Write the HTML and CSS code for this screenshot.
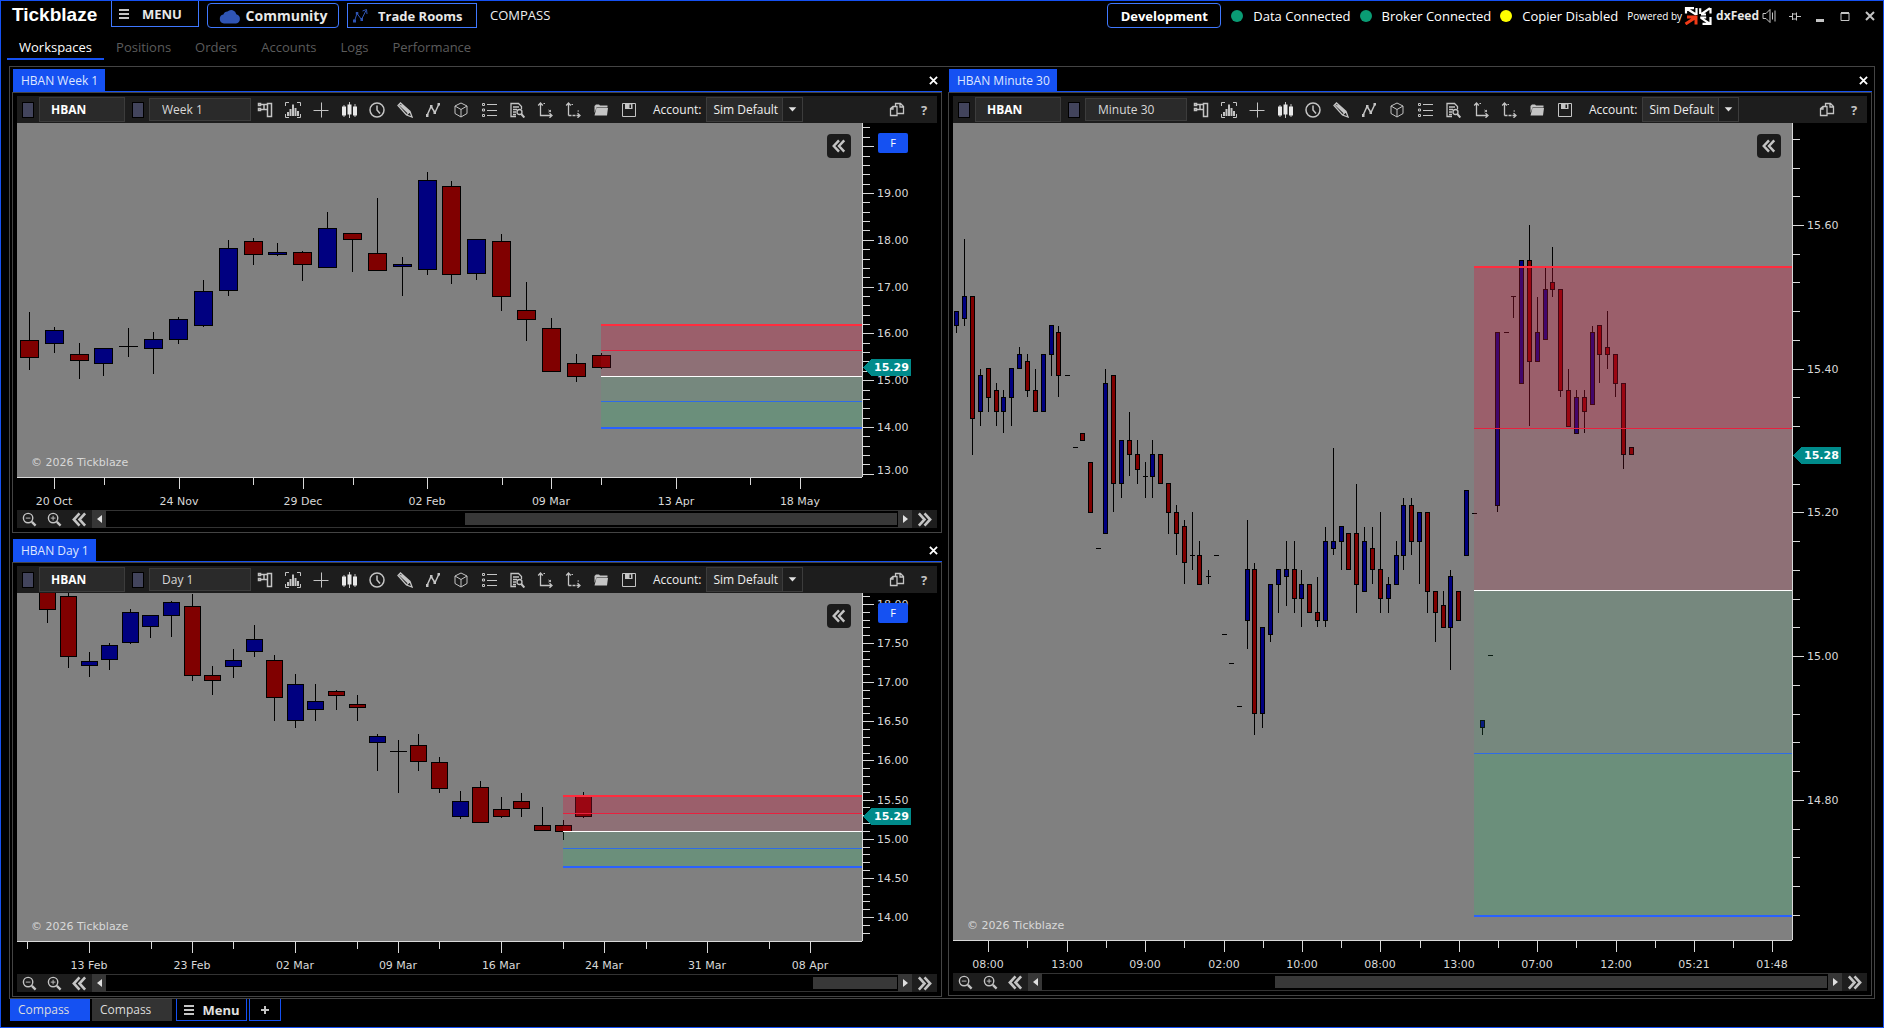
FILE: index.html
```html
<!DOCTYPE html>
<html lang="en">
<head>
<meta charset="utf-8">
<title>Tickblaze</title>
<link rel="stylesheet" href="styles.css">
</head>
<body>
<svg class="defs" aria-hidden="true">
  <symbol id="i-dom" viewBox="0 0 16 16"><path stroke-width="1.500" d="M10.500 1.500h4v13h-4zM1.500 1.500h2v2h-2zM1.500 6.500h2v2h-2zM4 2.500h6.500M4 7.500h6.500M7 2.500v5"/></symbol>
  <symbol id="i-profile" viewBox="0 0 16 16"><path d="M.5 4V.5H4M12 .5h3.500V4M.5 12v3.500H4M12 15.500h3.500V12"/><path stroke-width="2" d="M3 14v-4M5.500 14V7M8 14V2.500M10.500 14V6M13 14v-5"/></symbol>
  <symbol id="i-plus" viewBox="0 0 16 16"><path d="M8.500 .5v15M.5 8.500h15"/></symbol>
  <symbol id="i-candles" viewBox="0 0 16 16"><path d="M3 3v12M8.500 0v16M14 2v13"/><path stroke="#e8e8e8" stroke-width="4" d="M3 4.500v9M8.500 2.500v10M14 4.500v9"/></symbol>
  <symbol id="i-clock" viewBox="0 0 16 16"><circle cx="8" cy="8" r="7" stroke-width="1.500"/><path d="M8 3.500V8l3 3.500" stroke-width="1.500"/></symbol>
  <symbol id="i-pencil" viewBox="0 0 16 16"><path stroke-width="1.300" d="M1 3.500L3.500 1l9.500 8.500 2 5.500-5.500-2zM2.200 2.500l9 8.500M4.500 3l7.500 7M13 9.500L9.500 13"/></symbol>
  <symbol id="i-zigzag" viewBox="0 0 16 16"><path d="M2 13.500L6 4.500l4 6L14 2" stroke-width="1.500"/><path class="solid" d="M1 12h2.500v3H1zM5 3h2.500v3H5zM8.500 9h2.500v3H8.500zM12.500 1h2.500v2.500h-2.500z"/></symbol>
  <symbol id="i-cube" viewBox="0 0 16 16"><path d="M8 1l6 3v7.500L8 15l-6-3.500V4zM2 4l6 3.500L14 4M8 7.500V15"/></symbol>
  <symbol id="i-list" viewBox="0 0 16 16"><path d="M1.500 1.500h2v2h-2zM1.500 7h2v2h-2zM1.500 12.500h2v2h-2zM6 2.500h10M6 8.500h10M6 13.500h10"/></symbol>
  <symbol id="i-search" viewBox="0 0 16 16"><path stroke-width="1.300" d="M7 14.500H2v-13h7.500l3 3V7M4 5h6M4 7.500h4M4 10h3M4 12.500h3"/><circle cx="10.500" cy="10" r="2.500" stroke-width="1.300"/><path d="M12.300 12l3 3.500" stroke-width="2"/></symbol>
  <symbol id="i-axisx" viewBox="0 0 16 16"><path stroke-width="1.300" d="M3.500 2v11.500H14M1.200 3.500l2.300-2.500 2.300 2.500M12.500 11.200l2.500 2.300-2.500 2.300"/><path d="M6.500 1.500h1.500M11.500 8l2.500 2M14 8l-2.500 2"/></symbol>
  <symbol id="i-axisy" viewBox="0 0 16 16"><path stroke-width="1.300" d="M3.500 2v11.500M1.200 3.500l2.300-2.500 2.300 2.500M12.500 11.200l2.500 2.300-2.500 2.300"/><path stroke-width="1.300" stroke-dasharray="3 1" d="M3.500 13.500h10.500"/><path d="M6.500 2.500h1.500M12.500 9h1.500"/></symbol>
  <symbol id="i-folder" viewBox="0 0 16 16"><path class="solid" d="M1.500 4L3 2.500h3l1 1h7.500v2H3.500L1.500 11zM3.500 6H15l-1 7.500H1.500z"/></symbol>
  <symbol id="i-save" viewBox="0 0 16 16"><path d="M1.500 1.500h13v13h-13z"/><path class="solid" d="M4 1.500h7.500V7H4z"/><path class="gap" d="M8.500 2.500h1.500V6H8.500z"/></symbol>
  <symbol id="i-copy" viewBox="0 0 16 16"><path stroke-width="1.300" d="M5.500 13.500H1.500v-7l2.500-2h4v9H5.500M4 4.500v2.500H1.500M6.500 4.500V1.500h5l3 3v7H8M11 1.500V5h3.500"/></symbol>
  <symbol id="i-zoomout" viewBox="0 0 16 16"><circle cx="6.500" cy="6.500" r="5" stroke-width="1.500"/><path d="M4 6.500h5"/><path stroke-width="2.500" d="M10.500 10.500l4 4"/></symbol>
  <symbol id="i-zoomin" viewBox="0 0 16 16"><circle cx="6.500" cy="6.500" r="5" stroke-width="1.500"/><path d="M4 6.500h5M6.500 4v5"/><path stroke-width="2.500" d="M10.500 10.500l4 4"/></symbol>
  <symbol id="i-left2" viewBox="0 0 16 16"><path stroke-width="2.800" d="M8 1.500L2 8l6 6.500M14 1.500L8 8l6 6.500"/></symbol>
  <symbol id="i-right2" viewBox="0 0 16 16"><path stroke-width="2.800" d="M8 1.500L14 8l-6 6.500M2 1.500L8 8l-6 6.500"/></symbol>
  <symbol id="i-burger" viewBox="0 0 12 12"><path stroke-width="2" d="M1 2h10M1 6h10M1 10h10"/></symbol>
  <symbol id="i-x" viewBox="0 0 10 10"><path stroke-width="2" d="M1 1l8 8M9 1L1 9"/></symbol>
</svg>

<div class="app">
  <header class="titlebar">
    <div class="logo">Tickblaze</div>
    <button class="menu-button"><svg class="icon-burger"><use href="#i-burger"/></svg>MENU</button>
    <button class="link-button community"><svg class="cloud" viewBox="0 0 22 16"><path d="M5 15.500a4.500 4.500 0 0 1-.6-8.900A4.600 4.600 0 0 1 8.500 3.500 5.200 5.200 0 0 1 17.300 6.300 4.700 4.700 0 0 1 17 15.500z"/></svg>Community</button>
    <button class="link-button rooms"><svg class="rooms-icon" viewBox="0 0 16 16"><path d="M2.500 13L5 5.500l4.500 6L14 2.500M10.500 3l4-1.500.5 4.500"/><path class="solid" d="M1 11.500h3v3H1zM3.800 4h2.500v2.500H3.800zM8.500 10h2.500v3H8.500z"/></svg>Trade Rooms</button>
    <span class="workspace-name">COMPASS</span>
    <div class="status">
      <button class="mode">Development</button>
      <span class="state"><i class="dot ok"></i>Data Connected</span>
      <span class="state"><i class="dot ok"></i>Broker Connected</span>
      <span class="state"><i class="dot warn"></i>Copier Disabled</span>
      <span class="powered">Powered by</span>
      <svg class="dx" viewBox="0 0 28 18"><g fill="none" stroke="#fff" stroke-width="2.200"><path d="M2 6.500V1.200h8M2.500 1.500l9.500 6M12.500 1v7"/><path d="M16.200 7V1.200M26 1.200l-8.500 5.800M26.500 1v5.500M17 7.500h5"/><path d="M26.500 10v6.800h-8M17 10.800l9 6M16.200 10.500h6"/></g><path fill="none" stroke="#f03a17" stroke-width="3" d="M1.500 17l10-6.500M3 10h9v7.500"/></svg>
      <strong class="feed">dxFeed</strong>
    </div>
    <div class="window-buttons">
      <button aria-label="Sound"><svg viewBox="0 0 14 14"><path d="M1 4.500h3l4-4v13l-4-4H1zM10.500 3.500v7M13 1.500v11"/></svg></button>
      <button aria-label="Pin"><svg viewBox="0 0 14 14"><path d="M1 7.500h3M4.500 4v7M4.500 5h4v5h-4M8.500 3.500v8M9 7.500h4"/></svg></button>
      <button aria-label="Minimize"><svg viewBox="0 0 14 14"><path stroke-width="3" d="M3 11.500h8"/></svg></button>
      <button aria-label="Maximize"><svg viewBox="0 0 14 14"><path d="M3 4h8v7.500H3z"/><path stroke-width="2" d="M3 4h8"/></svg></button>
      <button aria-label="Close"><svg viewBox="0 0 14 14"><path stroke-width="2" d="M3 3l8 8M11 3l-8 8"/></svg></button>
    </div>
  </header>

  <nav class="sections">
    <a class="active" href="#">Workspaces</a>
    <a href="#">Positions</a>
    <a href="#">Orders</a>
    <a href="#">Accounts</a>
    <a href="#">Logs</a>
    <a href="#">Performance</a>
  </nav>

  <main class="workspace">
    <div class="column stack">
      <section class="panel" data-chart="week"></section>
      <section class="panel" data-chart="day"></section>
    </div>
    <div class="column single">
      <section class="panel" data-chart="minute"></section>
    </div>
  </main>

  <footer class="bottom">
    <button class="sheet active">Compass</button>
    <button class="sheet">Compass</button>
    <button class="outlined sheet-menu"><svg class="icon-burger"><use href="#i-burger"/></svg>Menu</button>
    <button class="outlined add" aria-label="Add workspace"><svg viewBox="0 0 10 10"><path stroke-width="2" d="M5 1v8M1 5h8"/></svg></button>
  </footer>
</div>
<script src="app.js"></script>
</body>
</html>
```
FILE: styles.css
```css
:root {
  --blue: #1551f2;
  --blue-line: #3f78ff;
  --frame: #444;
  --bar: #1d1d1d;
  --field: #2a2a2a;
  --icon: #c4c4c4;
}
* { box-sizing: border-box; }
body {
  margin: 0;
  background: #000;
  color: #fff;
  font: 12px/16px "Open Sans", "Noto Sans", sans-serif;
}
button, input, select { font: inherit; color: inherit; margin: 0; padding: 0; border: 0; background: none; border-radius: 0; }
button { display: flex; align-items: center; justify-content: center; cursor: pointer; }
svg { display: block; fill: none; stroke: var(--icon); }
.solid { fill: var(--icon); stroke: none; }
.gap { fill: var(--bar); stroke: none; }
.defs { position: absolute; width: 0; height: 0; }

.app {
  display: flex;
  flex-direction: column;
  min-height: 100vh;
  border: 1px solid var(--blue);
}

/* Title bar */
.titlebar { display: flex; height: 30px; align-items: flex-start; font-size: 13px; white-space: nowrap; }
.logo { width: 99px; margin-left: 11px; font: bold 19px/28px "Liberation Sans", Arial, sans-serif; }
.menu-button, .link-button, .mode { font-weight: bold; border: 1px solid var(--blue-line); color: #e8e8e8; }
.menu-button { width: 88px; height: 26px; border-top: 0; padding-left: 6px; gap: 12px; justify-content: flex-start; }
.icon-burger { width: 12px; height: 12px; }
.link-button { height: 25px; margin-top: 2px; }
.community { width: 132px; margin-left: 8px; gap: 5px; border-radius: 4px; font-size: 14px; }
.rooms { width: 130px; margin-left: 8px; padding-left: 4px; gap: 10px; justify-content: flex-start; }
.cloud { width: 22px; height: 16px; fill: #2f55b5; stroke: none; }
.rooms-icon { width: 16px; height: 16px; stroke: #2f55b5; }
.rooms-icon .solid { fill: #2f55b5; }
.workspace-name { margin: 6px 0 0 13px; color: #eee; }
.status { display: flex; align-items: center; margin: 2px 0 0 auto; height: 25px; }
.mode { width: 114px; height: 25px; border-radius: 4px; color: #fff; margin-right: 10px; }
.state { display: flex; align-items: center; gap: 10px; margin-right: 9px; }
.dot { width: 12px; height: 12px; border-radius: 6px; }
.ok { background: #0a9c74; }
.warn { background: #ffff00; }
.powered { font-size: 10px; }
.dx { width: 28px; height: 18px; margin: 0 4px 0 2px; }
.feed { font-size: 12px; color: #e8e8e8; }
.window-buttons { display: flex; margin: 4px 1px 0 3px; }
.window-buttons button { width: 25px; height: 22px; }
.window-buttons button:first-child { width: 14px; margin-right: 6px; }
.window-buttons svg { width: 14px; height: 14px; }

/* Section tabs */
.sections { display: flex; height: 29px; margin: 0 6px 6px; font-size: 13px; }
.sections a { padding: 8px 12px 0; color: #5c5c5c; text-decoration: none; }
.sections .active { color: #fff; border-bottom: 2px solid var(--blue); }

/* Workspace */
.workspace {
  flex: 1;
  display: grid;
  grid-template-columns: 930fr 924fr;
  gap: 6px;
  margin: 0 8px;
  padding: 2px 2px 1px;
  border: 1px solid var(--frame);
}
.column { display: grid; gap: 6px; min-width: 0; }
.stack { grid-template-rows: 464fr 458fr; }
.single { padding-bottom: 1px; }
.panel { display: flex; flex-direction: column; min-width: 0; min-height: 0; }
.panel-head { display: flex; height: 23px; margin-left: 1px; border-bottom: 1px solid var(--blue); justify-content: space-between; }
.panel-tab { padding: 1px 7px 0 8px; background: var(--blue); color: #dfe6ff; }
.panel-close { width: 18px; }
.panel-close svg { width: 9px; height: 9px; stroke: #fff; }
.panel-body { flex: 1; display: flex; flex-direction: column; min-height: 0; padding: 3px 4px 4px; border: 1px solid var(--frame); }

.toolbar { display: flex; align-items: center; height: 27px; background: var(--bar); color: #eee; }
.chip { width: 12px; height: 16px; margin-left: 5px; background: #42445c; border: 1px solid #000; }
.chip + .field { margin-left: 5px; }
.field { background: var(--field); border: 1px solid #3c3c3c; }
.symbol { width: 86px; height: 25px; padding-left: 11px; font-weight: bold; color: #fff; }
.field + .chip { margin-left: 7px; }
.interval { width: 102px; height: 23px; padding-left: 12px; color: #d8d8d8; }
.tool { width: 28px; height: 26px; }
.tool svg { width: 16px; height: 16px; }
.account { margin: 0 5px 0 10px; }
.select { position: relative; width: 97px; height: 25px; }
.select select { width: 97px; height: 25px; padding-left: 6px; appearance: none; background: var(--field); border: 1px solid #3c3c3c; }
.select svg { position: absolute; right: 1px; top: 1px; width: 20px; height: 23px; background: var(--bar); border-left: 1px solid #3c3c3c; stroke: none; fill: #e0e0e0; pointer-events: none; }
.spacer { flex: 1; }
.help { width: 26px; height: 26px; font-weight: bold; color: var(--icon); font-size: 13px; }

.chart { position: relative; flex: 1; display: flex; min-height: 240px; }
.chart > svg { flex: 1; width: 100%; min-width: 0; height: auto; shape-rendering: crispEdges; stroke: none; }
.chart text { font: 11px "DejaVu Sans", Verdana, sans-serif; fill: #d8d8d8; }
.chart .tag { font-weight: bold; fill: #fff; }
.collapse { position: absolute; right: 86px; top: 11px; width: 24px; height: 24px; border-radius: 4px; background: #1b1b1b; }
.collapse svg { width: 14px; height: 14px; }
.fit { position: absolute; right: 29px; top: 10px; width: 30px; height: 20px; border-radius: 2px; background: var(--blue); font-size: 11px; }

.scroll { display: flex; height: 18px; background: var(--bar); }
.scroll button { width: 25px; }
.scroll button svg { width: 15px; height: 15px; }
.scroll .step { width: 14px; background: #363636; }
.scroll .step svg { width: 5px; height: 8px; fill: #e0e0e0; stroke: none; }
.track { flex: 1; display: flex; padding: 2px 1px; background: #000; border: solid #333; border-width: 1px 0; }
.thumb { background: #383838; }

/* Bottom tabs */
.bottom { display: flex; height: 28px; padding-left: 9px; }
.bottom button { height: 22px; }
.bottom .sheet { width: 80px; margin-right: 2px; padding-left: 8px; justify-content: flex-start; background: #333; color: #ddd; }
.bottom .active { background: var(--blue); }
.outlined { border: 1px solid var(--blue); border-top: 0; margin-left: 2px; font-weight: bold; color: #e0e0e0; }
.sheet-menu { width: 71px; gap: 7px; font-size: 13px; }
.add { width: 32px; }
.add svg { width: 10px; height: 10px; }
```
FILE: app.js
```js
// Candle rows: [x, high, bodyTop, bodyBottom, low, kind]; kind: 'u' up, 'd' down, '-' no body.
const charts = {
  week: {
    title: 'HBAN Week 1', interval: 'Week 1', fit: true, thumb: [359, 791],
    body: 19, baseHeight: 354, last: ['15.29', 244],
    scale: { top: 20.4, step: 0.2, every: 5, ref: 19, refY: 70, unit: 46.8, min: 13, maxLabel: 19 },
    zone: { x: 584, lines: [202, 227, 253, 278, 305] },
    time: { labels: [[37, '20 Oct'], [162, '24 Nov'], [286, '29 Dec'], [410, '02 Feb'], [534, '09 Mar'], [659, '13 Apr'], [783, '18 May']], minor: [87, 236, 336, 485, 584, 733] },
    candles: [
      [12,189,217,235,247,'d'],[37,204,207,221,230,'u'],[62,220,231,238,256,'d'],[86,225,225,241,253,'u'],
      [111,205,223,223,234,'-'],[136,209,216,226,251,'u'],[161,194,196,217,221,'u'],[186,157,168,203,204,'u'],
      [211,117,125,168,173,'u'],[236,115,118,132,142,'d'],[260,120,129,132,133,'u'],[285,128,129,142,158,'d'],
      [310,89,105,145,145,'u'],[335,110,110,117,149,'d'],[360,75,130,148,148,'d'],[385,134,141,144,173,'u'],
      [410,49,57,147,152,'u'],[434,58,63,152,161,'d'],[459,116,116,151,157,'u'],[484,111,118,174,188,'d'],
      [509,159,187,197,218,'d'],[534,195,205,249,249,'d'],[559,231,240,254,259,'d'],[584,230,232,245,246,'d']
    ]
  },
  day: {
    title: 'HBAN Day 1', interval: 'Day 1', fit: true, thumb: [707, 791],
    body: 17, baseHeight: 348, last: ['15.29', 223],
    scale: { top: 18.1, step: 0.1, every: 5, ref: 17.5, refY: 50, unit: 78.3, min: 13.8, maxLabel: 18 },
    zone: { x: 546, lines: [203, 220, 238, 255, 274] },
    time: { labels: [[72, '13 Feb'], [175, '23 Feb'], [278, '02 Mar'], [381, '09 Mar'], [484, '16 Mar'], [587, '24 Mar'], [690, '31 Mar'], [793, '08 Apr']], minor: [10, 134, 216, 340, 422, 546, 629, 752] },
    candles: [
      [30,-5,-5,17,30,'d'],[51,0,3,64,75,'d'],[72,59,68,73,84,'u'],[92,50,52,67,77,'u'],[113,16,19,50,51,'u'],
      [133,22,22,34,45,'u'],[154,8,9,23,44,'u'],[175,1,13,83,88,'d'],[195,73,82,88,102,'d'],[216,56,67,74,85,'u'],
      [237,32,46,59,64,'u'],[257,62,67,105,128,'d'],[278,81,91,128,135,'u'],[298,91,108,117,128,'u'],
      [319,97,98,103,117,'d'],[340,102,111,115,128,'d'],[360,141,143,150,178,'u'],[381,147,158,158,200,'-'],
      [401,141,152,169,178,'d'],[422,164,169,196,200,'d'],[443,198,208,224,226,'u'],[463,188,194,230,230,'d'],
      [484,204,216,224,225,'d'],[504,200,208,216,224,'d'],[525,214,232,238,238,'d'],[546,227,232,239,247,'d'],
      [566,199,203,224,225,'d']
    ]
  },
  minute: {
    title: 'HBAN Minute 30', interval: 'Minute 30', fit: false, thumb: [233, 785],
    body: 5, baseHeight: 817, last: ['15.28', 332],
    scale: { top: 15.72, step: 0.04, every: 5, ref: 15.6, refY: 102, unit: 718.5, min: 14.64, maxLabel: 15.6 },
    zone: { x: 521, lines: [144, 305, 467, 630, 793] },
    time: { labels: [[35, '08:00'], [114, '13:00'], [192, '09:00'], [271, '02:00'], [349, '10:00'], [427, '08:00'], [506, '13:00'], [584, '07:00'], [663, '12:00'], [741, '05:21'], [819, '01:48']], minor: [74, 153, 231, 310, 388, 467, 545, 623, 702, 780] },
    candles: [
      [3,188,188,203,210,'u'],[11,116,173,196,203,'u'],[19,173,173,296,332,'d'],[27,246,252,289,303,'u'],
      [35,245,245,275,289,'d'],[43,260,267,289,303,'d'],[50,267,274,289,310,'u'],[58,245,245,275,303,'u'],
      [66,224,231,246,246,'u'],[74,231,238,268,274,'d'],[82,246,267,289,289,'d'],[90,231,231,289,289,'u'],
      [98,202,202,232,253,'u'],[105,203,209,253,274,'d'],[114,252,252,252,252,'-'],[122,324,324,324,324,'-'],
      [129,310,310,318,318,'d'],[137,339,339,390,390,'d'],[145,425,425,425,425,'-'],[152,246,260,411,411,'u'],
      [160,252,252,361,389,'d'],[168,317,317,361,375,'u'],[176,289,317,332,353,'d'],[184,317,331,347,361,'d'],
      [192,339,353,353,375,'-'],[199,317,331,354,375,'u'],[207,331,331,361,361,'d'],[215,360,360,390,411,'d'],
      [223,382,389,411,432,'d'],[231,397,403,440,461,'d'],[239,389,432,432,447,'-'],[246,418,432,462,462,'d'],
      [255,447,453,453,461,'-'],[263,432,432,432,432,'-'],[271,511,511,511,511,'-'],[278,540,540,540,540,'-'],
      [286,583,583,583,583,'-'],[294,397,446,498,526,'u'],[301,440,446,591,612,'d'],[309,504,504,591,605,'u'],
      [317,461,461,512,519,'u'],[325,446,446,462,490,'u'],[333,418,446,454,483,'u'],[341,418,446,476,490,'d'],
      [348,447,461,476,504,'u'],[356,461,461,490,490,'d'],[364,454,489,498,504,'d'],[372,404,418,498,504,'u'],
      [380,325,418,426,432,'u'],[388,403,403,419,447,'u'],[395,410,410,447,447,'d'],[403,361,410,462,490,'d'],
      [411,404,418,469,469,'u'],[419,404,425,447,461,'d'],[427,389,446,476,490,'d'],[435,454,461,476,490,'u'],
      [443,418,432,462,462,'u'],[450,375,382,433,447,'u'],[458,375,382,419,432,'d'],[466,389,389,419,461,'u'],
      [474,389,389,469,490,'d'],[482,468,468,490,519,'d'],[490,468,482,505,505,'d'],[497,447,453,505,547,'u'],
      [505,468,468,498,498,'d'],[513,367,367,433,433,'u'],[521,390,390,390,390,'-'],[529,597,597,605,612,'u'],
      [537,532,532,532,532,'-'],[544,209,209,383,389,'u'],[553,209,209,209,209,'-'],[560,173,173,173,195,'-'],
      [568,137,137,261,261,'u'],[576,102,137,239,303,'d'],[584,174,209,239,239,'u'],[592,145,166,217,217,'u'],
      [599,124,159,167,174,'d'],[607,166,166,268,274,'d'],[615,246,267,304,304,'d'],[623,267,274,311,311,'u'],
      [631,267,274,289,310,'d'],[639,203,209,282,282,'u'],[646,202,202,232,260,'d'],[654,188,224,232,246,'d'],
      [662,231,231,261,274,'d'],[670,260,260,332,346,'d'],[678,324,324,332,332,'d']
    ]
  }
};

const tools = [
  ['dom', 'Depth of market'], ['profile', 'Volume profile'], ['plus', 'Crosshair'], ['candles', 'Chart type'],
  ['clock', 'Session'], ['pencil', 'Drawing tools'], ['zigzag', 'Indicators'], ['cube', 'Objects'],
  ['list', 'Properties'], ['search', 'Data'], ['axisx', 'Scale X'], ['axisy', 'Scale Y'], ['folder', 'Open'], ['save', 'Save']
];
const icon = name => `<svg><use href="#i-${name}"/></svg>`;
const AXIS_WIDTH = 75;
const TIME_HEIGHT = 33;
const SCROLL_BUTTONS = 130;

function panelMarkup(id, c) {
  return `
    <div class="panel-head">
      <button class="panel-tab">${c.title}</button>
      <button class="panel-close" aria-label="Close ${c.title}">${icon('x')}</button>
    </div>
    <div class="panel-body">
      <div class="toolbar">
        <button class="chip" aria-label="Link symbol"></button>
        <input class="field symbol" aria-label="Symbol" value="HBAN">
        <button class="chip" aria-label="Link interval"></button>
        <input class="field interval" aria-label="Interval" value="${c.interval}">
        ${tools.map(t => `<button class="tool" aria-label="${t[1]}">${icon(t[0])}</button>`).join('')}
        <label class="account" for="acc-${id}">Account:</label>
        <div class="select">
          <select id="acc-${id}"><option>Sim Default</option></select>
          <svg viewBox="0 0 20 23"><path d="M6 9h8l-4 4.500z"/></svg>
        </div>
        <div class="spacer"></div>
        <button class="tool" aria-label="Duplicate">${icon('copy')}</button>
        <button class="help" aria-label="Help">?</button>
      </div>
      <div class="chart">
        <svg role="img" aria-label="${c.title} chart"></svg>
        <button class="collapse" aria-label="Collapse">${icon('left2')}</button>
        ${c.fit ? '<button class="fit">F</button>' : ''}
      </div>
      <div class="scroll">
        <button aria-label="Zoom out">${icon('zoomout')}</button>
        <button aria-label="Zoom in">${icon('zoomin')}</button>
        <button aria-label="First">${icon('left2')}</button>
        <button class="step" aria-label="Back"><svg viewBox="0 0 5 8"><path d="M5 0v8L0 4z"/></svg></button>
        <div class="track"><div class="thumb"></div></div>
        <button class="step" aria-label="Forward"><svg viewBox="0 0 5 8"><path d="M0 0v8l5-4z"/></svg></button>
        <button aria-label="Last">${icon('right2')}</button>
      </div>
    </div>`;
}

function draw(panel, c) {
  const svg = panel.querySelector('.chart > svg');
  svg.innerHTML = '';
  const box = panel.querySelector('.chart').getBoundingClientRect();
  const w = Math.round(box.width), h = Math.round(box.height);
  const pw = w - AXIS_WIDTH, ph = h - TIME_HEIGHT;
  const k = ph / c.baseHeight;
  const y = v => Math.round(v * k);
  const rect = (x, t, rw, rh, fill, more = '') => `<rect x="${x}" y="${t}" width="${rw}" height="${rh}" fill="${fill}" ${more}/>`;
  let out = rect(0, 0, pw, ph, '#808080');

  const half = (c.body - 1) / 2;
  for (const [x, hi, top, bottom, lo, kind] of c.candles) {
    if (lo > hi) out += rect(x, y(hi), 1, y(lo) - y(hi), '#000');
    if (kind === '-') out += rect(x - half, y(top), c.body, 1, '#000');
    else {
      out += rect(x - half, y(top), c.body, y(bottom) - y(top), '#000');
      out += rect(x - half + 1, y(top) + 1, c.body - 2, Math.max(1, y(bottom) - y(top) - 2), kind === 'u' ? '#000080' : '#800000');
    }
  }

  const [l0, l1, l2, l3, l4] = c.zone.lines.map(y);
  const zx = c.zone.x, zw = pw - zx;
  out += rect(zx, l0, zw, l1 - l0, 'rgb(220,20,60)', 'fill-opacity=".3"');
  out += rect(zx, l1, zw, l2 - l1, 'rgb(220,20,60)', 'fill-opacity=".15"');
  out += rect(zx, l2, zw, l3 - l2, 'rgb(60,179,113)', 'fill-opacity=".15"');
  out += rect(zx, l3, zw, l4 - l3, 'rgb(60,179,113)', 'fill-opacity=".3"');
  out += rect(zx, l0 - 1, zw, 2, '#ff2c3e') + rect(zx, l1, zw, 1, '#e8203e');
  out += rect(zx, l2, zw, 1, '#fff') + rect(zx, l3, zw, 1, '#2f6ce6') + rect(zx, l4 - 1, zw, 2, '#2962ff');

  out += `<text x="14" y="${ph - 11}">© 2026 Tickblaze</text>`;
  out += rect(pw, 0, 1, ph, '#d8d8d8') + rect(0, ph, pw, 1, '#d8d8d8');

  const s = c.scale;
  const count = Math.round((s.top - s.min) / s.step);
  for (let i = 0; i <= count; i++) {
    const price = s.top - i * s.step;
    const ty = y(s.refY + (s.ref - price) * s.unit);
    const major = Math.round(price / s.step) % s.every === 0;
    if (ty < 0) continue;
    out += rect(pw + 1, ty, major ? 11 : 7, 1, '#d8d8d8');
    if (major && price < s.maxLabel + s.step / 2) {
      out += `<text x="${pw + 15}" y="${Math.min(ty + 4, ph - 3)}">${price.toFixed(2)}</text>`;
    }
  }
  for (const [x, label] of c.time.labels) {
    out += rect(x, ph, 1, 12, '#d8d8d8') + `<text x="${x}" y="${ph + 28}" text-anchor="middle">${label}</text>`;
  }
  for (const x of c.time.minor) out += rect(x, ph, 1, 8, '#d8d8d8');

  const [price, py] = c.last;
  const ly = y(py);
  out += `<path d="M${pw + 1} ${ly}L${pw + 9} ${ly - 8}H${pw + 49}V${ly + 9}H${pw + 9}z" fill="#008b8b"/>`;
  out += `<text class="tag" x="${pw + 12}" y="${ly + 4}">${price}</text>`;
  svg.innerHTML = out;

  const travel = w - SCROLL_BUTTONS;
  const thumb = panel.querySelector('.thumb');
  thumb.style.marginLeft = (c.thumb[0] - 1) / travel * 100 + '%';
  thumb.style.width = (c.thumb[1] - c.thumb[0]) / travel * 100 + '%';
}

const panels = [...document.querySelectorAll('.panel')];
for (const p of panels) p.innerHTML = panelMarkup(p.dataset.chart, charts[p.dataset.chart]);
const drawAll = () => panels.forEach(p => draw(p, charts[p.dataset.chart]));
drawAll();
window.addEventListener('resize', drawAll);
```
